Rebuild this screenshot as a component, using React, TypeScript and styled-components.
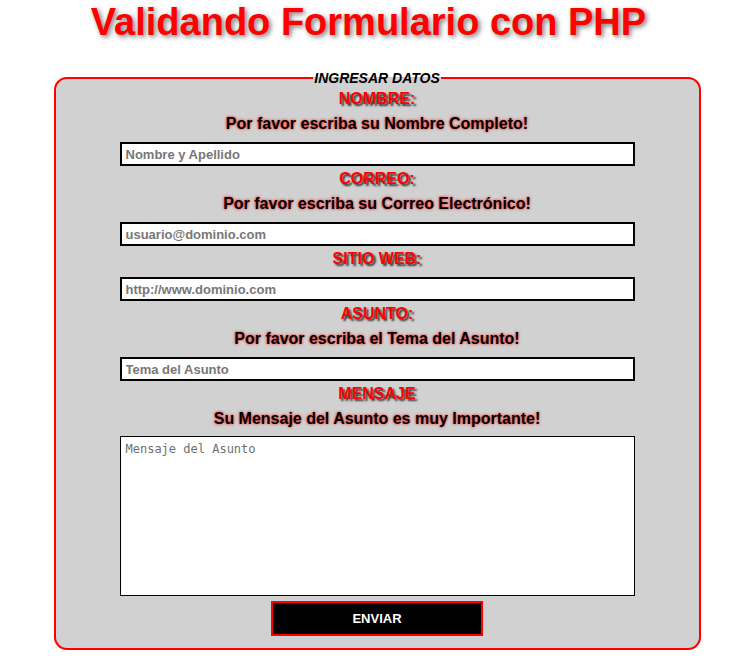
import React from "react";
import styled, { createGlobalStyle } from "styled-components";

const GlobalStyle = createGlobalStyle`
  html, body {
    margin: 0;
    padding: 0;
    background: #ffffff;
    font-family: "Liberation Sans", Arial, sans-serif;
  }
`;

const Page = styled.div`
  display: flex;
  flex-direction: column;
  align-items: center;
`;

const Title = styled.h1`
  margin: 0;
  padding-right: 17px;
  font-family: "Liberation Sans", Arial, sans-serif;
  font-size: 38px;
  line-height: 44px;
  font-weight: bold;
  color: #ff0000;
  text-shadow: 2px 2px 5px #7a7a7a;
  text-align: center;
`;

const Fieldset = styled.fieldset`
  box-sizing: border-box;
  width: 647px;
  margin: 26px 0 0 0;
  padding: 4px 0 12px 0;
  border: 2px solid #ff0000;
  border-radius: 13px;
  background: #d1d1d1;
  display: flex;
  flex-direction: column;
  align-items: center;
`;

const Legend = styled.legend`
  margin: 0 auto;
  padding: 0 1px;
  font-family: "Liberation Sans", Arial, sans-serif;
  font-size: 14px;
  line-height: 16px;
  font-weight: bold;
  font-style: italic;
  color: #000000;
`;

const FieldLabel = styled.label<{ $first?: boolean }>`
  display: block;
  margin-top: ${(p) => (p.$first ? "0" : "4px")};
  font-size: 16px;
  line-height: 18px;
  font-weight: bold;
  color: #ff0000;
  text-shadow: 2px 2px 2px #333333;
  text-align: center;
`;

const Hint = styled.p`
  margin: 7px 0 0 0;
  font-size: 16px;
  line-height: 18px;
  font-weight: bold;
  color: #000000;
  text-shadow: 0 0 3px #ff0000;
  text-align: center;
`;

const TextInput = styled.input`
  box-sizing: border-box;
  width: 515px;
  height: 24px;
  margin-top: 9px;
  padding: 0 4px;
  border: 2px solid #000000;
  border-radius: 0;
  background: #ffffff;
  font-family: "Liberation Sans", Arial, sans-serif;
  font-size: 13px;
  font-weight: bold;
  color: #000000;
  outline: none;

  &::placeholder {
    color: #777777;
    opacity: 1;
  }
`;

const MessageArea = styled.textarea`
  box-sizing: border-box;
  width: 515px;
  height: 160px;
  margin-top: 8px;
  padding: 5px 5px;
  border: 1px solid #000000;
  border-radius: 0;
  background: #ffffff;
  resize: none;
  font-family: "DejaVu Sans Mono", "Liberation Mono", monospace;
  font-size: 12px;
  line-height: 15px;
  outline: none;

  &::placeholder {
    color: #6f6f6f;
    opacity: 1;
  }
`;

const SubmitButton = styled.button`
  box-sizing: border-box;
  width: 212px;
  height: 35px;
  margin-top: 5px;
  border: 2px solid #ff0000;
  border-radius: 0;
  background: #000000;
  color: #ffffff;
  font-family: "Liberation Sans", Arial, sans-serif;
  font-size: 13px;
  font-weight: bold;
  cursor: pointer;
`;

export default function App() {
  return (
    <>
      <GlobalStyle />
      <Page>
        <Title>Validando Formulario con PHP</Title>
        <Fieldset>
          <Legend>INGRESAR DATOS</Legend>
          <FieldLabel $first htmlFor="nombre">NOMBRE:</FieldLabel>
          <Hint>Por favor escriba su Nombre Completo!</Hint>
          <TextInput id="nombre" type="text" placeholder="Nombre y Apellido" />
          <FieldLabel htmlFor="correo">CORREO:</FieldLabel>
          <Hint>Por favor escriba su Correo Electrónico!</Hint>
          <TextInput id="correo" type="text" placeholder="usuario@dominio.com" />
          <FieldLabel htmlFor="web">SITIO WEB:</FieldLabel>
          <TextInput id="web" type="text" placeholder="http://www.dominio.com" />
          <FieldLabel htmlFor="asunto">ASUNTO:</FieldLabel>
          <Hint>Por favor escriba el Tema del Asunto!</Hint>
          <TextInput id="asunto" type="text" placeholder="Tema del Asunto" />
          <FieldLabel htmlFor="mensaje">MENSAJE</FieldLabel>
          <Hint>Su Mensaje del Asunto es muy Importante!</Hint>
          <MessageArea id="mensaje" placeholder="Mensaje del Asunto" />
          <SubmitButton type="submit">ENVIAR</SubmitButton>
        </Fieldset>
      </Page>
    </>
  );
}
